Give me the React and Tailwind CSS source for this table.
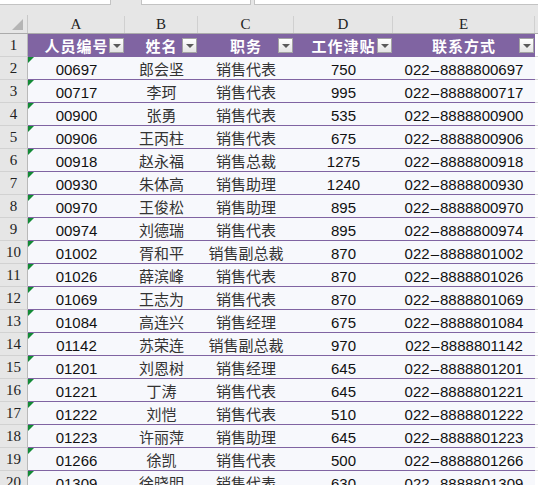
const rows = [
  ['00697', '郎会坚', '销售代表', '750', '022-8888800697'],
  ['00717', '李珂', '销售代表', '995', '022-8888800717'],
  ['00900', '张勇', '销售代表', '535', '022-8888800900'],
  ['00906', '王丙柱', '销售代表', '675', '022-8888800906'],
  ['00918', '赵永福', '销售总裁', '1275', '022-8888800918'],
  ['00930', '朱体高', '销售助理', '1240', '022-8888800930'],
  ['00970', '王俊松', '销售助理', '895', '022-8888800970'],
  ['00974', '刘德瑞', '销售代表', '895', '022-8888800974'],
  ['01002', '胥和平', '销售副总裁', '870', '022-8888801002'],
  ['01026', '薛滨峰', '销售代表', '870', '022-8888801026'],
  ['01069', '王志为', '销售代表', '870', '022-8888801069'],
  ['01084', '高连兴', '销售经理', '675', '022-8888801084'],
  ['01142', '苏荣连', '销售副总裁', '970', '022-8888801142'],
  ['01201', '刘恩树', '销售经理', '645', '022-8888801201'],
  ['01221', '丁涛', '销售代表', '645', '022-8888801221'],
  ['01222', '刘恺', '销售代表', '510', '022-8888801222'],
  ['01223', '许丽萍', '销售助理', '645', '022-8888801223'],
  ['01266', '徐凯', '销售代表', '500', '022-8888801266'],
  ['01309', '徐晓明', '销售代表', '630', '022-8888801309'],
];

const headers = ['人员编号', '姓名', '职务', '工作津贴', '联系方式'];
const letters = ['A', 'B', 'C', 'D', 'E'];

const grid = 'grid grid-cols-[28px_97px_73px_96px_99px_142px_1fr]';

const FilterButton = () => (
  <div className="absolute right-[1px] top-[4px] w-[15px] h-[15px] bg-gradient-to-b from-white to-[#e4e4e4] border border-[#a3a3a3] flex items-center justify-center">
    <div className="w-0 h-0 border-l-[4px] border-r-[4px] border-t-[4px] border-l-transparent border-r-transparent border-t-[#5a5a5a] mt-[1px]" />
  </div>
);

const RowNum = ({ n }) => (
  <div className="bg-[#e6e6e6] border-r border-b border-r-[#b9b9b9] border-b-[#d2d2d2] flex items-end justify-center pb-[3px] font-['Liberation_Serif',serif] text-[15px] leading-none text-[#222]">
    {n}
  </div>
);

// phone numbers: the hyphen in the sheet font is a long one
const Phone = ({ v }) => {
  const [a, b] = v.split('-');
  return (
    <span>
      {a}
      <span className="mx-[1px]">–</span>
      {b}
    </span>
  );
};

export default function App() {
  return (
    <div className="w-[538px] h-[485px] overflow-hidden bg-[#e6e6e6] font-['Liberation_Sans','Noto_Sans_CJK_SC',sans-serif]">
      {/* formula bar fragments */}
      <div className="h-[15px] flex items-start">
        <div className="w-[111px] h-[5px] bg-white border-r border-b border-[#c3c3c3]" />
        <div className="w-[30px]" />
        <div className="w-[110px] h-[5px] bg-white border-l border-r border-b border-[#c3c3c3]" />
        <div className="w-[3px]" />
        <div className="flex-1 h-[5px] bg-white border-l border-b border-[#c3c3c3]" />
      </div>

      {/* column letters */}
      <div className={`${grid} h-[19px] border-b border-[#ababab]`}>
        <div className="border-r border-[#c8c8c8] flex items-end justify-end pr-[4px] pb-[3px]">
          <svg width="11" height="11" viewBox="0 0 11 11">
            <polygon points="11,0 11,11 0,11" fill="#b5b5b5" />
          </svg>
        </div>
        {letters.map((l) => (
          <div key={l} className="border-r border-[#d0d0d0] mt-[1px] flex items-center justify-center font-['Liberation_Serif',serif] text-[15px] leading-none text-[#222]">
            {l}
          </div>
        ))}
        <div />
      </div>

      {/* table header row */}
      <div className={`${grid} h-[23px]`}>
        <RowNum n="1" />
        {headers.map((h) => (
          <div key={h} className="relative bg-[#8064a2] flex items-center justify-center text-white font-['Noto_Sans_CJK_SC',sans-serif] font-bold text-[15px] tracking-[1px] leading-none">
            <span className="pb-[1px]">{h}</span>
            <FilterButton />
          </div>
        ))}
        <div className="bg-white border-b border-[#dadada]" />
      </div>

      {/* data rows */}
      {rows.map((r, i) => (
        <div key={r[0]} className={`${grid} h-[23px]`}>
          <RowNum n={i + 2} />
          {r.map((v, j) => (
            <div
              key={j}
              className={`relative bg-[#f7f8fc] border-b border-[#8064a2] flex items-end justify-center pb-[2px] text-[15px] leading-none whitespace-nowrap ${j === 1 || j === 2 ? 'text-[#333]' : 'text-[#111]'}`}
            >
              {j === 0 && (
                <div className="absolute top-0 left-0 w-0 h-0 border-t-[6px] border-r-[6px] border-t-[#138a36] border-r-transparent" />
              )}
              {j === 4 ? <Phone v={v} /> : v}
            </div>
          ))}
          <div className="bg-white border-b border-[#dadada]" />
        </div>
      ))}
    </div>
  );
}
